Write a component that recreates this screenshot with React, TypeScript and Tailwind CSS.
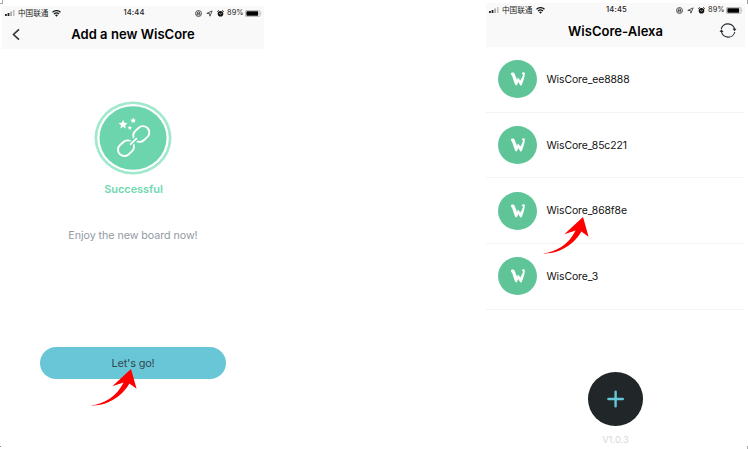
import React from "react";

function StatusBar({ time }: { time: string }) {
  return (
    <div className="relative flex h-[13px] w-full items-center justify-between pl-[3px] pr-[2px] pt-px text-[7.5px] leading-3 text-[#222]">
      <div className="flex items-center">
        <svg width="11" height="8" viewBox="0 0 11 8">
          <rect x="0" y="5" width="1.8" height="2" fill="#222" />
          <rect x="2.6" y="4" width="1.8" height="3" fill="#222" />
          <rect x="5.2" y="2.5" width="1.8" height="4.5" fill="#aaa" />
          <rect x="8" y="1" width="1.5" height="6" fill="#bbb" />
        </svg>
        <span className="ml-[2px] whitespace-nowrap font-['Noto_Sans_CJK_SC',sans-serif] text-[7.6px]">中国联通</span>
        <svg className="ml-[4px]" width="9" height="7" viewBox="0 0 9 7">
          <path d="M.5 2.3Q4.5-1 8.5 2.3M2 3.9q2.5-2 5 0" fill="none" stroke="#111" strokeWidth="1.3" />
          <path d="M3 5q1.5-1.1 3 0L4.5 6.7Z" fill="#111" />
        </svg>
      </div>
      <span className="absolute inset-x-0 pl-[2px] text-center text-[7.6px] font-medium tracking-[0.15px]">{time}</span>
      <div className="flex items-center">
        <svg width="7" height="7" viewBox="0 0 7 7" fill="none" stroke="#333" strokeWidth=".8">
          <circle cx="3.5" cy="3.5" r="3" />
          <path d="M2 3.3h3v1.6H2zM2.5 3.3V2.2q1-1 2 0v1.1" />
        </svg>
        <svg className="ml-[4px]" width="7" height="7" viewBox="0 0 7 7">
          <path d="M.8 3.4 6.1.9 3.9 6.2 3.5 3.6Z" fill="none" stroke="#333" strokeWidth=".8" />
        </svg>
        <svg className="ml-[4px]" width="7" height="7" viewBox="0 0 7 7">
          <circle cx="3.5" cy="3.8" r="2.8" fill="#111" />
          <path d="M.3 1.6 1.7.4M5.3.4l1.4 1.2" stroke="#111" strokeWidth="1" />
          <path d="m2.2 3.2 1.3 1 1.3-1.2" fill="none" stroke="#fff" strokeWidth=".6" />
        </svg>
        <span className="ml-[3px] text-[7.4px]">89%</span>
        <svg className="ml-[1.5px]" width="17" height="7" viewBox="0 0 17 7">
          <rect x=".4" y=".4" width="14.6" height="6.2" rx="1.4" fill="#fff" stroke="#999" strokeWidth=".7" />
          <rect x="1.4" y="1.3" width="11.8" height="4.4" rx=".4" fill="#000" />
          <path d="M15.8 2.3q1.2 1.2 0 2.4Z" fill="#999" />
        </svg>
      </div>
    </div>
  );
}

function PointerArrow({ place }: { place: string }) {
  return (
    <svg className={`absolute ${place}`} width="48" height="38" viewBox="0 0 48 38">
      <path d="M41 1 46.6 20.8 39.3 15.4C33 27.5 17 38.5.5 37.3 14 36.5 27 28 33.6 14.5L22.3 18.2Z" fill="#fe0000" />
    </svg>
  );
}

function Row({ name }: { name: string }) {
  return (
    <li className="flex h-[65.7px] items-center border-b border-[#f3f3f3] pl-[12.3px]">
      <div className="flex h-[38px] w-[39px] items-center justify-center rounded-[50%] bg-[#5fc598]">
        <svg width="16" height="14" viewBox="0 0 16 14" fill="#fff">
          <path d="M1.2.9C2.6.1 4.2.6 4.7 1.9L7 7.8 8 5.5 10.4 8.6C12 5.9 13.1 3.5 13 2.3 12.4 2.5 11.7 1.9 12.1 1.1 12.9 0 14.8.1 14.8 1.4 14.8 5 13.1 9.8 11.4 13.5L10.3 13.5 8.3 10 6.9 13.3 5.6 13.3C4.3 10.9 3.3 7.3 2.3 4.4 1.7 3.1.3 2.4 1.2.9Z" />
        </svg>
      </div>
      <span className="ml-[9.2px] pt-[1.5px] text-[10.4px] leading-4 tracking-[-0.1px] text-[#111]">{name}</span>
    </li>
  );
}

const boards = ["WisCore_ee8888", "WisCore_85c221", "WisCore_868f8e", "WisCore_3"];

export default function App() {
  return (
    <main className="relative flex h-[449px] w-[748px] justify-between overflow-hidden bg-white pl-[2px] pr-[3px] font-[Inter,'Liberation_Sans',sans-serif]">
      <section className="mt-[6px] w-[262px]">
        <header className="h-[43px] bg-[#f9f9f9]">
          <StatusBar time="14:44" />
          <div className="relative flex h-8 items-center justify-center">
            <svg className="absolute left-[9px] top-[9px]" width="10" height="13" viewBox="0 0 10 13">
              <path d="M8 1.3 2.5 6.5 8 11.7" fill="none" stroke="#30363d" strokeWidth="1.6" />
            </svg>
            <h1 className="text-[13px] font-semibold tracking-[0.03px] text-black">Add a new WisCore</h1>
          </div>
        </header>
        <div className="flex flex-col items-center pt-[52px]">
          <svg width="78" height="74" viewBox="0 0 78 74">
            <ellipse cx="39" cy="37" rx="38.5" ry="36.5" fill="#a0e9cd" />
            <ellipse cx="39" cy="37" rx="35.8" ry="33.9" fill="#fff" />
            <ellipse cx="39" cy="37" rx="33.5" ry="31.8" fill="#6dd5ae" />
            <g fill="none" stroke="#fff" strokeWidth="1.9">
              <rect x="-8.6" y="-6.3" width="17.2" height="12.6" rx="6.3" transform="translate(47.3 33) rotate(-42)" />
              <rect x="-8.6" y="-6.3" width="17.2" height="12.6" rx="6.3" transform="translate(32 47.2) rotate(-42)" />
            </g>
            <path d="M36.3 43.3 43 37.1" stroke="#6dd5ae" strokeWidth="4.6" />
            <path d="m36.6 43.2 5.8-5.5" stroke="#fff" strokeWidth="1.8" strokeLinecap="round" />
            <g fill="#fff">
              <path d="m29.1 18.8 1.3 2.9 3.2.4-2.4 2.1.6 3.2-2.7-1.6-2.7 1.6.6-3.2-2.4-2.1 3.2-.4Z" />
              <path d="m39.2 16.6.9 1.8 2 .3-1.5 1.4.4 2-1.8-1-1.8 1 .4-2-1.5-1.4 2-.3Z" />
              <path d="m35.8 24.6.7 1.4 1.5.2-1.1 1.1.3 1.5-1.4-.8-1.3.8.3-1.5-1.1-1.1 1.5-.2Z" />
            </g>
          </svg>
          <p className="mt-[6px] pl-px text-[11px] font-semibold leading-4 tracking-[-0.05px] text-[#70d8b0]">Successful</p>
          <p className="mt-[31px] text-[10.7px] leading-4 tracking-[-0.05px] text-[#929aa3]">Enjoy the new board now!</p>
          <button className="mt-[102.7px] h-8 w-[186.5px] rounded-full bg-[#69c6d7] text-[10.9px] leading-8 tracking-[-0.15px] text-[#30464d]">Let's go!</button>
        </div>
      </section>

      <section className="mt-[3px] w-[259px]">
        <header className="h-[43.5px] bg-[#f9f9f9]">
          <StatusBar time="14:45" />
          <div className="relative flex h-8 items-center justify-center">
            <h1 className="text-[13px] font-semibold tracking-[0.03px] text-black">WisCore-Alexa</h1>
            <svg className="absolute left-[233px] top-[6px]" width="18" height="17" viewBox="0 0 18 17">
              <path d="M2.2 7A6.8 6.5 0 0 1 15.6 7.5M15.8 10A6.8 6.5 0 0 1 2.4 9.3" fill="none" stroke="#20282e" strokeWidth="1.1" />
              <path d="m13.5 6.6 4 .2-2 2.4ZM.5 9.8l2-2.5 2 2.7Z" fill="#20282e" />
            </svg>
          </div>
        </header>
        <ul className="pt-[0.5px]">
          {boards.map((name) => <Row key={name} name={name} />)}
        </ul>
        <div className="flex flex-col items-center pt-[62.5px]">
          <button aria-label="Add board" className="flex h-[54px] w-[55.5px] items-center justify-center rounded-[50%] bg-[#212629]">
            <svg width="18" height="18" viewBox="0 0 18 18">
              <path d="M8.6 1.8v14.4M1.4 9h14.4" stroke="#66c7d9" strokeWidth="2.4" strokeLinecap="round" />
            </svg>
          </button>
          <p className="mt-[5.5px] text-[9.4px] leading-4 text-[#d5d9d9]">V1.0.3</p>
        </div>
      </section>

      <PointerArrow place="left-[90px] top-[368px]" />
      <PointerArrow place="left-[542px] top-[216px]" />
      <i className="absolute left-0 top-[3px] h-px w-[3px] bg-[#aaa]" />
      <i className="absolute left-[2px] top-0 h-[4px] w-px bg-[#aaa]" />
      <i className="absolute right-0 top-0 h-[4px] w-px bg-[#999]" />
      <i className="absolute left-0 top-[446px] h-px w-px bg-[#888]" />
      <i className="absolute right-0 top-[446px] h-[3px] w-px bg-[#aaa]" />
    </main>
  );
}
